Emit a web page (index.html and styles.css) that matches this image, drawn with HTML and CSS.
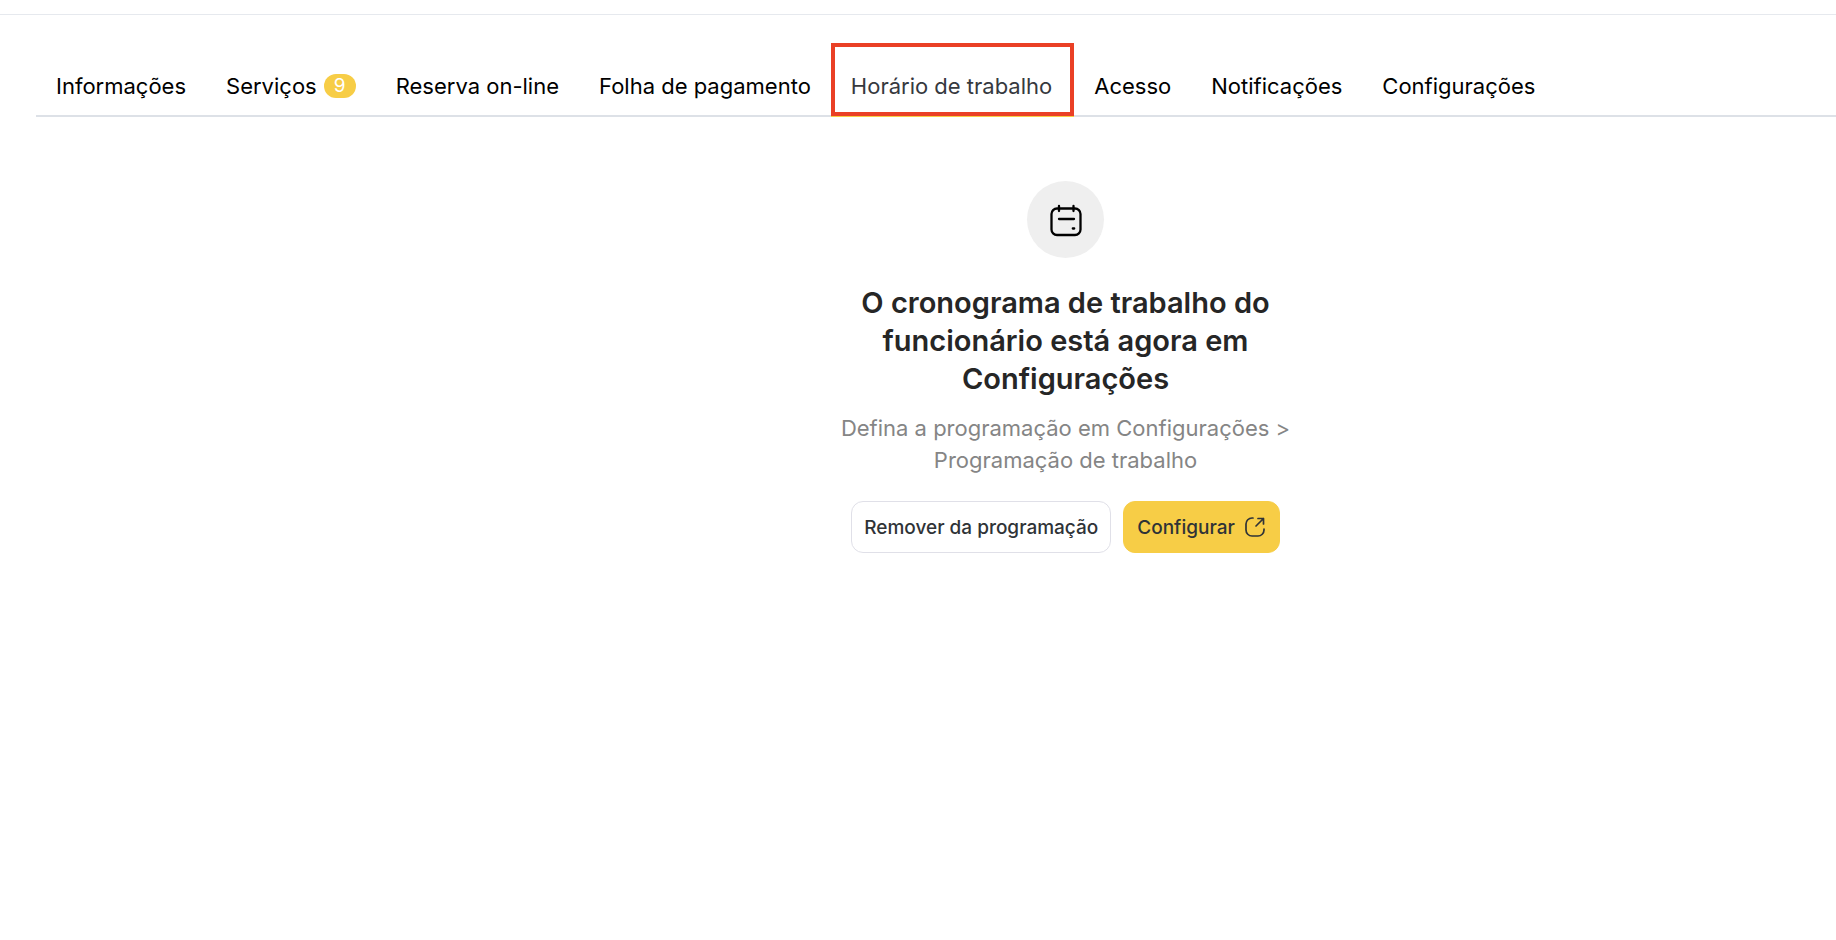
FILE: index.html
```html
<!doctype html>
<html lang="pt">
<head>
<meta charset="utf-8">
<title>Horário de trabalho</title>
<link rel="stylesheet" href="styles.css">
</head>

<body>
	<div class="topline"></div>
	<nav class="tabs">
		<a href="#">Informações</a>
		<a href="#">Serviços <span class="badge">9</span></a>
		<a href="#">Reserva on-line</a>
		<a href="#">Folha de pagamento</a>
		<a href="#" class="active">Horário de trabalho</a>
		<a href="#">Acesso</a>
		<a href="#">Notificações</a>
		<a href="#">Configurações</a>
	</nav>
	<main class="empty">
		<div class="circle">
			<svg width="32" height="34" viewBox="0 0 32 34" fill="none" stroke="#000" stroke-width="2.3" stroke-linecap="round">
				<rect x="1.5" y="5.5" width="29" height="26.5" rx="5.5"/>
				<path d="M9 3v5M23.5 3v5M9 16h15M22.8 25.5h1.4"/>
			</svg>
		</div>
		<h1>O cronograma de trabalho do funcionário está agora em Configurações</h1>
		<p>Defina a programação em Configurações &gt; Programação de trabalho</p>
		<div class="buttons">
			<button type="button" class="btn">Remover da programação</button>
			<button type="button" class="btn yellow">Configurar
				<svg width="20" height="20" viewBox="0 0 20 20" fill="none" stroke="#2f3337" stroke-width="1.7" stroke-linecap="round" stroke-linejoin="round">
					<path d="M8 1H7a6 6 0 0 0-6 6v6a6 6 0 0 0 6 6h6a6 6 0 0 0 6-6v-1M11 9l7.500-7.500M13 1.500h5.500v5.500"/>
				</svg>
			</button>
		</div>
	</main>
</body>
</html>
```

FILE: styles.css
```css
*{ margin:0; padding:0; box-sizing:border-box; }
body{ background:#fff; color:#000; font-family:Inter, "Liberation Sans", sans-serif; overflow-x:hidden; }
.topline{ height:15px; border-bottom:1px solid #e6e9ee; }
.tabs{ display:flex; margin:28px 0 0 36px; height:74px; border-bottom:2px solid #dde1e7; }
.tabs a{ display:flex; align-items:center; gap:7px; height:74px; padding:11px 20px 0; color:#000; font-size:22px; line-height:28px; text-decoration:none; white-space:nowrap; }
.tabs .active{ height:73px; padding:12px 18px 0 16px; border:4px solid #ea4025; color:#36393e; box-shadow:0 1px 0 #f7cd46; }
.badge{ width:32px; height:24px; border-radius:12px; background:#f7cd46; color:#fff; font-size:19px; line-height:24px; text-align:center; }
.empty{ display:flex; flex-direction:column; align-items:center; padding:64px 0 0 295px; text-align:center; }
.circle{ display:flex; align-items:center; justify-content:center; width:77px; height:77px; border-radius:50%; background:#efefef; }
h1{ max-width:460px; margin-top:26px; color:#262626; font-size:29px; line-height:38px; font-weight:600; }
p{ max-width:460px; margin-top:14px; color:#858585; font-size:22px; line-height:32px; }
.buttons{ display:flex; gap:12px; margin-top:25px; }
.btn{ display:flex; align-items:center; gap:10px; height:52px; padding:0 12px; border:1px solid #e0e0e8; border-radius:12px; background:#fff; color:#2f3337; font-family:inherit; font-size:19px; font-weight:500; cursor:pointer; }
.yellow{ padding:0 14px 0 13px; border-color:#f7cd46; background:#f7cd46; }
```
